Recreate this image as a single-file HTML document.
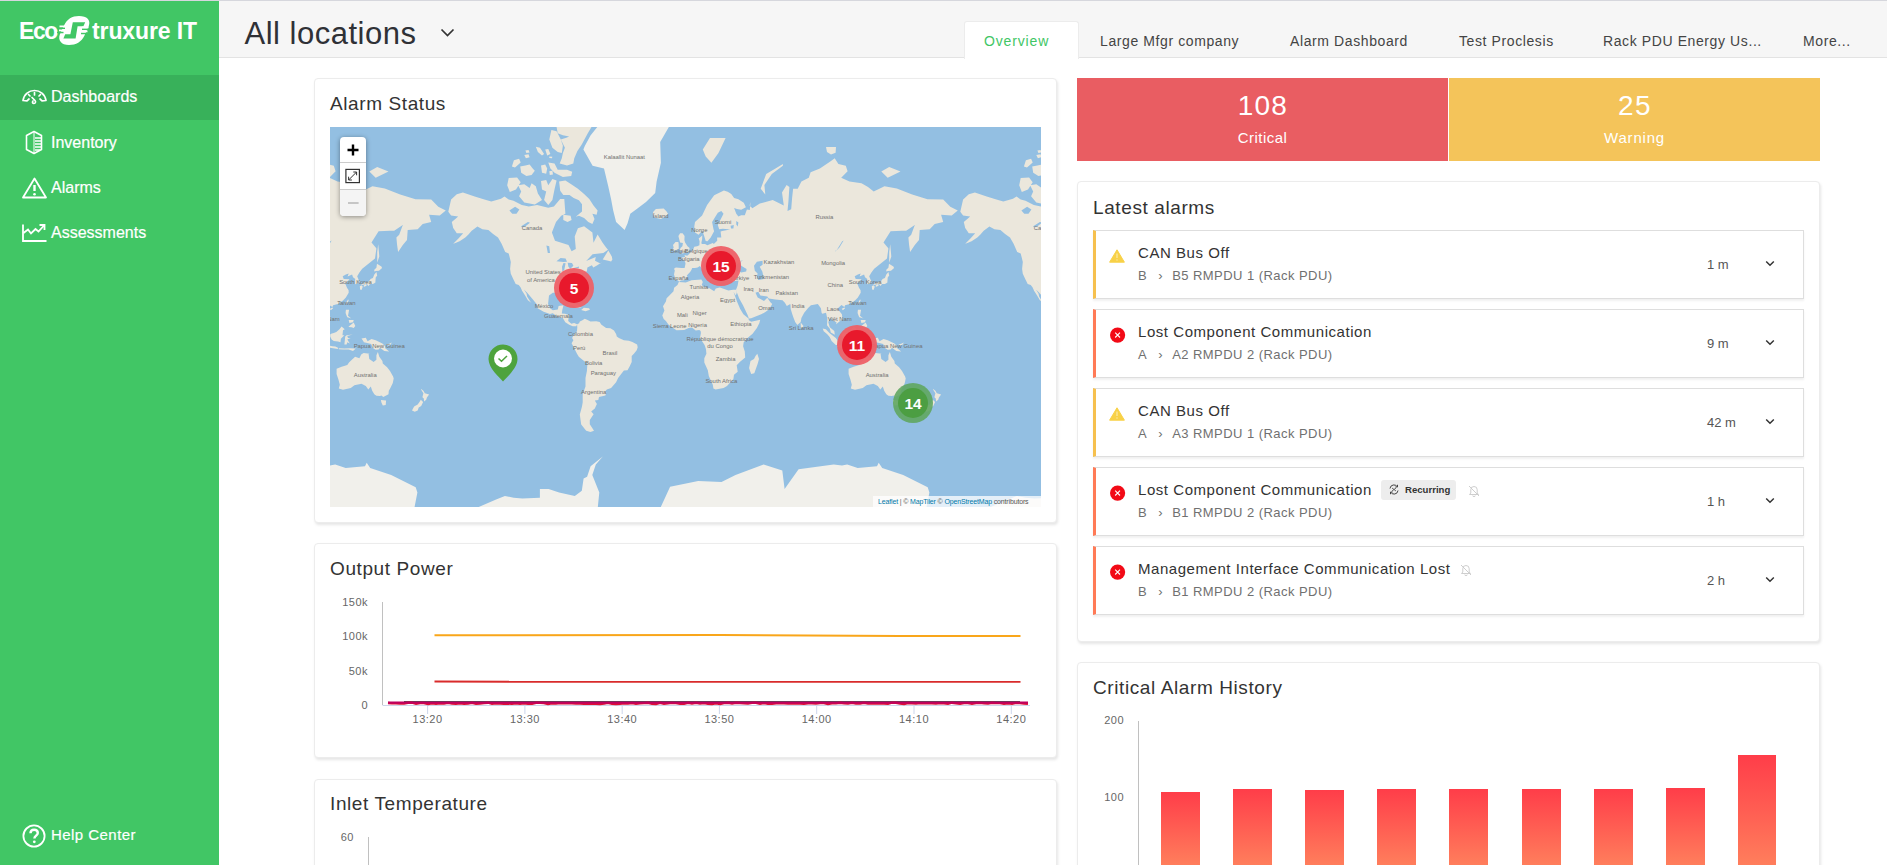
<!DOCTYPE html>
<html><head><meta charset="utf-8">
<style>
*{box-sizing:border-box;margin:0;padding:0}
html,body{width:1887px;height:865px;overflow:hidden;background:#fff;font-family:"Liberation Sans",sans-serif;color:#333}
.a{position:absolute;white-space:nowrap}
#topline{left:0;top:0;width:1887px;height:1px;background:#d6d7dd}
#side{left:0;top:1px;width:219px;height:864px;background:#41c665}
#active{left:0;top:75px;width:219px;height:45px;background:#38b15a}
.nav{left:51px;font-size:16px;color:#fff;line-height:16px;-webkit-text-stroke:0.2px #fff}
#hdr{left:219px;top:1px;width:1668px;height:57px;background:#f6f6f6;border-bottom:1px solid #e3e3e3}
.tab{font-size:14px;color:#444;letter-spacing:0.6px;line-height:14px}
.card{background:#fff;border:1px solid #ececec;border-radius:4px;box-shadow:1px 2px 3px rgba(0,0,0,0.10)}
.ctitle{font-size:19px;color:#333;line-height:19px;letter-spacing:0.6px}
.row{background:#fff;border:1px solid #dedede;box-shadow:0 2px 2px rgba(0,0,0,0.06)}
.rt{font-size:15px;color:#333;line-height:15px;letter-spacing:0.55px}
.rs{font-size:13px;color:#707070;line-height:13px;letter-spacing:0.45px}
.tm{font-size:13px;color:#555;line-height:13px}
.mk{width:40px;height:40px;border-radius:50%;background:rgba(238,96,102,0.95)}
.mk .mi{position:absolute;left:5px;top:5px;width:30px;height:30px;border-radius:50%;background:#e8192c;color:#fff;font-weight:bold;font-size:15.5px;line-height:32px;text-align:center}
.mk.g{background:rgba(96,166,96,0.9)}
.mk.g .mi{background:#4c9e42}
.ml{position:absolute;width:80px;text-align:center;font-size:5.9px;line-height:9px;color:#707070;white-space:nowrap}
.ax{font-size:11px;color:#666;line-height:11px;letter-spacing:0.5px}
</style></head><body>
<div class="a" id="topline"></div>
<div class="a" id="side"></div>
<div class="a" id="active"></div>

<!-- logo -->
<div class="a" style="left:19px;top:20px;font-size:23px;font-weight:bold;color:#fff;line-height:23px;letter-spacing:-1.4px">Eco</div>
<div class="a" style="left:92px;top:20px;font-size:23px;font-weight:bold;color:#fff;line-height:23px;letter-spacing:-0.1px">truxure IT</div>
<svg class="a" style="left:57px;top:15px" width="34" height="31">
<path d="M12 30C4 30 0.8 25 2.8 19.5L7 10.5C10 4 15 1 22 1C30 1 34 5 31.8 11L27.5 20.5C24.5 27 19 30 12 30Z" fill="#fff"/>
<path d="M15.8 7.3H28.2L26.4 11.3H20.6L18.6 23.6H6.4L8.2 19.2H13.4Z" fill="#41c665"/>
<path d="M0 13.2H8M0 17.6H6.5M25 14.2H34M24 18.6H34" stroke="#41c665" stroke-width="1.5"/>
<path d="M2.5 11.4H8.5M2 15.4H7.5M24.8 12.4H31.5M24.2 16.4H30.5" stroke="#fff" stroke-width="1.6"/>
</svg>
<svg class="a" style="left:21px;top:88px" width="27" height="18" fill="none" stroke="#fff" stroke-width="1.7" stroke-linejoin="round" stroke-linecap="round">
<path d="M2 12.5C3 6 8 2.5 13.5 2.5C19 2.5 24 6 25 12.5L21 12.8L19 11M2 12.5L6 12.8L8 11"/>
<path d="M13.5 4.5V7M7.5 6.5L9 8M19.5 6.5L18 8"/>
<path d="M11 9.5L14 12.5C15 13.5 14.5 15.5 13 15.5C11.5 15.5 11 14 12 13"/>
</svg>
<svg class="a" style="left:24px;top:130px" width="20" height="25" fill="none" stroke="#fff" stroke-width="1.6" stroke-linejoin="round">
<path d="M2.5 5.5L10 1.5L17.5 5.5V19.5L10 23.5L2.5 19.5Z"/>
<path d="M10 1.5V23.5" stroke-width="1"/>
<path d="M11 8H17M11 11H17M11 14H17M11 17H17M11 20H16" stroke-width="1.3"/>
</svg>
<svg class="a" style="left:21px;top:176px" width="27" height="24" fill="none" stroke="#fff" stroke-width="1.8" stroke-linejoin="round">
<path d="M13.5 2.5L25 21.5H2Z"/>
<path d="M13.5 9V15" stroke-width="2.4"/>
<circle cx="13.5" cy="18.2" r="1.3" fill="#fff" stroke="none"/>
</svg>
<svg class="a" style="left:21px;top:222px" width="27" height="21" fill="none" stroke="#fff" stroke-width="1.8">
<path d="M2 2.5V19H25.5"/>
<path d="M2.5 11L7 7.5L10 11.5L14.5 7L17.5 9.5L23 3.5"/>
<path d="M18.5 3H23.5V8"/>
</svg>
<svg class="a" style="left:22px;top:824px" width="25" height="25" fill="none" stroke="#fff">
<circle cx="12" cy="12" r="10.6" stroke-width="1.8"/>
<path d="M8.5 9.2C8.5 7 10 5.7 12.1 5.7C14.3 5.7 15.8 7 15.8 9C15.8 11.5 12.4 11.8 12.4 14.5" stroke-width="2.4"/>
<circle cx="12.3" cy="17.8" r="1.4" fill="#fff" stroke="none"/>
</svg>

<div class="a nav" style="top:89px">Dashboards</div>
<div class="a nav" style="top:135px">Inventory</div>
<div class="a nav" style="top:180px">Alarms</div>
<div class="a nav" style="top:225px">Assessments</div>
<div class="a nav" style="top:827px;font-size:15px;line-height:15px;letter-spacing:0.45px">Help Center</div>

<div class="a" id="hdr"></div>
<div class="a" style="left:244.5px;top:17.5px;font-size:31px;color:#2f3136;line-height:31px;letter-spacing:0.5px">All locations</div>
<svg class="a" style="left:439px;top:27px" width="16" height="11"><path d="M2.5 2.5L8.5 8.5L14.5 2.5" fill="none" stroke="#333" stroke-width="1.7"/></svg>

<!-- tabs -->
<div class="a" style="left:964px;top:21px;width:115px;height:38px;background:#fff;border:1px solid #ececec;border-bottom:none;border-radius:3px 3px 0 0"></div>
<div class="a tab" style="left:984px;top:34px;color:#41c665;letter-spacing:0.85px">Overview</div>
<div class="a tab" style="left:1100px;top:34px">Large Mfgr company</div>
<div class="a tab" style="left:1290px;top:34px">Alarm Dashboard</div>
<div class="a tab" style="left:1459px;top:34px">Test Proclesis</div>
<div class="a tab" style="left:1603px;top:34px">Rack PDU Energy Us...</div>
<div class="a tab" style="left:1803px;top:34px">More...</div>

<!-- Alarm status card -->
<div class="a card" style="left:314px;top:78px;width:743px;height:445px"></div>
<div class="a ctitle" style="left:330px;top:94px">Alarm Status</div>
<div class="a" id="map" style="left:330px;top:127px;width:711px;height:380px;background:#93bfe2;overflow:hidden"><svg width="711" height="380" style="position:absolute;left:0;top:0"><path fill="#ebe7dc" d="M118.3 84.8L121.1 72.6L126.8 67.3L132.9 65.5L144.7 69.6L154.4 72.4L161.3 74.5L171.0 71.7L174.5 69.6L178.7 72.4L183.5 73.8L191.8 78.0L198.8 79.4L207.1 78.0L218.2 80.7L223.9 79.4L230.2 72.1L234.3 72.1L235.4 86.7L231.2 88.8L226.0 95.0L221.9 105.4L225.0 113.8L238.5 117.9L241.6 124.3L245.8 122.1L244.7 109.6L247.9 101.3L254.1 99.2L262.4 105.4L263.5 115.8L267.6 107.5L272.8 115.9L276.1 120.4L278.0 122.7L273.3 126.1L262.6 127.2L256.2 133.9L265.8 129.9L265.0 133.7L270.4 136.4L271.9 135.3L266.9 138.6L263.3 140.4L261.9 138.2L257.4 140.4L256.8 144.4L252.0 146.5L249.8 150.2L249.1 153.1L249.8 156.1L246.3 158.5L242.0 162.4L243.3 169.7L242.9 172.5L240.9 171.1L239.4 168.1L237.7 164.8L234.2 164.2L229.9 164.5L230.3 166.5L227.1 165.7L222.8 165.7L219.0 168.6L218.5 172.9L218.1 177.1L220.0 181.3L222.8 183.3L227.8 182.5L228.6 179.0L233.5 178.3L232.3 183.1L231.8 186.5L234.9 186.8L238.9 188.0L238.2 193.9L241.3 196.7L244.1 196.0L247.1 197.3L246.3 199.3L242.7 199.2L239.2 197.8L235.3 195.3L232.8 191.0L227.1 189.5L222.8 186.2L220.0 187.0L213.6 184.8L207.2 180.9L207.6 178.3L202.9 172.5L197.2 165.7L193.9 162.4L196.5 166.5L197.2 169.7L200.8 175.2L201.5 176.1L197.9 173.2L195.1 168.4L192.2 164.0L190.5 160.3L188.7 158.1L185.7 157.1L183.0 151.5L180.8 146.7L180.1 142.1L180.8 135.1L179.8 130.7L178.7 126.6L175.2 125.0L171.6 116.8L168.0 110.5L163.1 107.0L158.4 102.9L152.4 102.3L147.4 99.4L141.7 103.7L138.2 107.8L135.3 110.5L129.6 114.3L125.4 116.0L123.2 116.8L128.2 111.8L133.2 106.2L126.8 106.2L123.2 100.9L121.8 94.9L128.2 89.5L121.1 88.5ZM630.3 84.8L633.1 72.6L638.8 67.3L644.9 65.5L656.7 69.6L666.4 72.4L673.3 74.5L683.0 71.7L686.5 69.6L690.7 72.4L695.5 73.8L703.8 78.0L710.8 79.4L719.1 78.0L730.2 80.7L735.9 79.4L742.2 72.1L746.3 72.1L747.4 86.7L743.2 88.8L738.0 95.0L733.9 105.4L737.0 113.8L750.5 117.9L753.6 124.3L757.8 122.1L756.7 109.6L759.9 101.3L766.1 99.2L774.4 105.4L775.5 115.8L779.6 107.5L784.8 115.9L788.1 120.4L790.0 122.7L785.3 126.1L774.6 127.2L768.2 133.9L777.8 129.9L777.0 133.7L782.4 136.4L783.9 135.3L778.9 138.6L775.3 140.4L773.9 138.2L769.4 140.4L768.8 144.4L764.0 146.5L761.8 150.2L761.1 153.1L761.8 156.1L758.3 158.5L754.0 162.4L755.3 169.7L754.9 172.5L752.9 171.1L751.4 168.1L749.7 164.8L746.2 164.2L741.9 164.5L742.3 166.5L739.1 165.7L734.8 165.7L731.0 168.6L730.5 172.9L730.1 177.1L732.0 181.3L734.8 183.3L739.8 182.5L740.6 179.0L745.5 178.3L744.3 183.1L743.8 186.5L746.9 186.8L750.9 188.0L750.2 193.9L753.3 196.7L756.1 196.0L759.1 197.3L758.3 199.3L754.7 199.2L751.2 197.8L747.3 195.3L744.8 191.0L739.1 189.5L734.8 186.2L732.0 187.0L725.6 184.8L719.2 180.9L719.6 178.3L714.9 172.5L709.2 165.7L705.9 162.4L708.5 166.5L709.2 169.7L712.8 175.2L713.5 176.1L709.9 173.2L707.1 168.4L704.2 164.0L702.5 160.3L700.7 158.1L697.7 157.1L695.0 151.5L692.8 146.7L692.1 142.1L692.8 135.1L691.8 130.7L690.7 126.6L687.2 125.0L683.6 116.8L680.0 110.5L675.1 107.0L670.4 102.9L664.4 102.3L659.4 99.4L653.7 103.7L650.2 107.8L647.3 110.5L641.6 114.3L637.4 116.0L635.2 116.8L640.2 111.8L645.2 106.2L638.8 106.2L635.2 100.9L633.8 94.9L640.2 89.5L633.1 88.5ZM272.7 132.4L278.3 123.6L281.8 129.4L282.4 132.6L281.1 134.5L278.3 133.7ZM323.1 85.1L325.9 82.0L333.7 81.6L336.6 84.5L338.0 86.8L335.9 89.2L330.9 92.1L325.2 90.8L323.1 87.5ZM247.1 197.3L249.1 196.2L249.8 194.6L252.0 193.6L254.8 191.8L257.6 193.1L260.5 194.6L266.2 194.3L269.7 195.0L271.2 197.5L276.1 201.1L280.4 201.3L284.0 203.6L286.1 207.0L286.8 209.6L288.9 211.0L293.9 213.2L298.9 213.7L302.4 214.9L307.1 217.4L307.7 220.3L306.7 223.2L303.9 226.8L301.7 229.0L301.7 234.9L299.6 239.4L297.5 243.2L293.9 243.5L288.1 251.1L286.1 255.2L281.1 261.1L276.8 262.5L275.4 264.2L276.4 265.4L275.4 268.5L269.0 269.9L268.3 273.1L264.8 273.6L266.9 276.9L264.8 281.4L261.2 284.5L263.6 287.2L259.8 293.1L259.8 297.2L264.0 303.7L260.5 304.9L256.2 303.7L251.2 297.6L249.8 287.6L252.0 279.4L252.7 275.2L252.7 267.2L255.5 259.4L255.5 251.1L256.9 244.0L257.4 236.4L253.4 233.4L248.8 229.7L247.0 226.8L244.1 221.0L241.6 216.3L243.4 213.2L242.1 211.0L243.4 208.5L245.1 207.0L247.0 203.9L247.3 200.3ZM348.8 155.0L355.8 155.5L361.5 153.2L371.4 152.5L372.8 155.0L371.7 158.1L373.6 159.7L379.0 161.0L384.2 164.3L385.8 161.4L389.9 160.5L398.4 163.5L403.1 162.7L406.0 162.7L406.8 165.7L405.8 168.4L403.6 165.0L407.0 174.4L410.2 182.1L413.4 187.3L418.8 191.7L418.6 193.1L421.2 194.7L430.2 192.7L429.4 196.0L426.9 201.1L422.6 206.8L418.4 210.3L416.2 212.2L413.7 215.3L413.1 219.3L414.8 224.6L415.2 230.4L409.8 234.9L406.7 238.3L407.7 244.8L404.0 247.8L403.4 251.9L401.3 254.2L397.0 259.0L393.6 261.1L385.6 262.5L383.4 261.6L382.8 257.7L378.8 248.9L377.8 243.2L374.3 235.6L374.3 231.2L376.4 226.8L376.0 222.2L374.6 218.1L370.0 211.0L370.9 206.0L370.6 203.9L369.3 203.1L365.7 203.5L362.0 200.5L358.6 201.1L354.2 202.9L346.5 203.3L341.6 199.9L338.4 197.5L335.9 193.9L333.7 192.0L332.3 188.5L334.4 183.6L333.0 179.3L335.9 174.4L336.6 171.3L339.4 168.4L343.5 164.2L344.1 160.7L347.5 158.1ZM427.3 226.8L429.0 231.9L427.6 237.1L424.3 246.3L421.2 247.1L419.8 243.2L419.1 240.9L420.5 234.1L424.0 231.9L425.5 229.0ZM-162.8 154.7L-163.8 153.8L-165.5 152.5L-167.5 152.9L-167.3 149.8L-168.0 147.4L-167.2 143.5L-168.0 141.7L-166.2 140.4L-160.5 141.0L-157.4 141.0L-156.5 136.8L-156.9 134.7L-158.4 133.1L-161.6 130.7L-156.9 130.1L-157.5 127.9L-154.8 128.8L-152.5 126.8L-152.1 125.0L-149.8 124.1L-148.4 121.6L-147.7 119.7L-144.8 119.2L-142.6 118.2L-142.4 114.3L-143.3 111.5L-139.7 108.6L-139.9 112.5L-140.6 115.5L-140.3 117.0L-137.0 117.0L-134.6 118.2L-129.2 116.0L-128.2 117.0L-124.8 113.8L-124.9 110.5L-120.7 110.5L-121.4 104.5L-119.7 104.0L-111.8 102.6L-119.2 101.7L-122.8 102.3L-124.2 97.9L-118.5 86.8L-120.7 84.1L-124.2 85.8L-129.9 94.9L-128.5 102.3L-127.9 104.3L-131.3 110.5L-134.5 114.3L-136.3 114.0L-138.0 108.6L-139.2 105.1L-139.6 103.4L-143.4 107.8L-147.0 105.4L-147.7 99.4L-147.0 94.9L-139.9 88.5L-134.9 78.0L-131.3 73.0L-127.8 68.2L-118.1 63.5L-114.3 64.8L-110.7 66.9L-107.9 71.0L-103.6 72.2L-98.2 75.7L-96.1 80.2L-100.8 82.7L-105.0 82.0L-107.9 80.9L-105.7 86.8L-103.6 89.5L-100.8 88.2L-97.2 88.2L-95.1 82.4L-92.2 83.1L-91.5 75.0L-92.4 78.5L-89.6 81.3L-82.2 76.6L-69.3 72.9L-58.2 78.5L-60.0 65.5L-55.4 58.1L-52.6 60.0L-53.6 74.8L-54.5 84.0L-50.8 82.2L-49.9 71.1L-48.9 61.8L-44.3 61.8L-40.6 54.4L-33.2 50.7L-31.4 45.2L-22.1 41.5L-11.0 34.1L-7.3 31.3L-3.6 36.9L3.8 38.7L5.6 44.3L-0.8 50.7L7.5 54.4L19.5 56.3L26.0 60.0L31.7 64.6L42.5 59.2L54.8 61.5L70.2 67.6L85.5 72.3L101.2 72.6L108.3 79.8L115.8 83.4L109.7 88.5L99.1 87.8L101.2 94.9L92.7 97.0L87.7 102.3L77.7 102.9L77.0 113.0L72.8 118.0L68.1 125.0L67.1 118.0L66.4 110.5L69.2 107.8L72.8 97.9L64.2 103.7L60.0 103.7L48.6 104.3L41.5 115.5L45.7 120.4L46.4 121.6L45.0 131.6L32.2 141.7L29.4 145.6L27.2 149.3L29.4 154.7L28.7 156.2L25.1 157.3L25.1 152.9L25.3 152.0L23.0 150.2L22.1 147.4L17.6 149.6L18.7 146.5L15.9 147.4L12.7 149.3L13.7 152.0L19.6 152.2L15.2 156.4L17.0 160.7L18.6 163.2L18.7 165.7L15.9 170.5L13.0 173.6L7.8 177.1L3.1 178.3L2.4 180.1L-0.5 178.1L-3.3 180.6L-4.3 182.1L-0.1 187.3L0.5 192.4L-2.6 194.6L-5.8 197.3L-5.5 195.3L-8.3 193.9L-11.2 191.4L-11.9 190.2L-13.7 195.3L-12.2 200.3L-7.7 203.9L-7.2 207.8L-11.2 205.5L-12.2 201.8L-15.0 198.2L-14.6 191.7L-16.0 185.8L-19.7 186.8L-20.4 185.8L-21.1 181.3L-24.2 177.1L-28.2 177.8L-31.1 178.3L-33.9 180.9L-37.8 185.8L-40.6 191.0L-41.3 194.9L-44.6 198.0L-46.7 195.3L-48.4 191.1L-49.7 187.3L-51.3 182.1L-51.5 178.3L-51.7 177.1L-55.2 179.0L-57.1 175.7L-59.5 173.2L-66.6 172.5L-73.3 171.6L-74.7 169.4L-81.6 168.4L-83.7 164.8L-86.5 165.7L-84.3 170.5L-81.6 172.1L-78.0 174.1L-74.7 170.8L-71.6 175.2L-69.8 176.9L-72.6 182.1L-76.6 185.1L-80.8 187.3L-90.8 191.2L-93.1 191.5L-94.4 188.0L-99.0 178.3L-102.9 171.3L-105.0 165.7L-106.0 162.7L-105.0 160.2L-104.3 158.3L-103.5 153.6L-109.3 154.3L-111.4 153.8L-115.7 152.9L-117.1 148.4L-117.5 147.2L-121.4 146.5L-122.2 146.3L-120.7 151.1L-121.1 151.3L-122.8 154.0L-124.5 151.6L-126.4 148.4L-127.1 144.6L-129.1 142.5L-132.8 139.8L-135.3 136.6L-137.3 137.0L-137.0 139.8L-135.6 140.6L-132.0 143.9L-128.5 147.2L-130.6 149.3L-132.0 151.1L-132.5 151.3L-132.6 147.4L-134.6 145.9L-137.4 144.0L-139.9 141.7L-142.1 139.0L-144.4 140.4L-147.1 141.1L-149.8 141.1L-150.5 142.7L-151.7 144.8L-155.2 148.4L-154.5 149.6L-156.2 151.8L-158.2 153.2L-161.1 153.4ZM349.2 154.7L348.2 153.8L346.5 152.5L344.5 152.9L344.7 149.8L344.0 147.4L344.8 143.5L344.0 141.7L345.8 140.4L351.5 141.0L354.6 141.0L355.5 136.8L355.1 134.7L353.6 133.1L350.4 130.7L355.1 130.1L354.5 127.9L357.2 128.8L359.5 126.8L359.9 125.0L362.2 124.1L363.6 121.6L364.3 119.7L367.2 119.2L369.4 118.2L369.6 114.3L368.7 111.5L372.3 108.6L372.1 112.5L371.4 115.5L371.7 117.0L375.0 117.0L377.4 118.2L382.8 116.0L383.8 117.0L387.2 113.8L387.1 110.5L391.3 110.5L390.6 104.5L392.3 104.0L400.2 102.6L392.8 101.7L389.2 102.3L387.8 97.9L393.5 86.8L391.3 84.1L387.8 85.8L382.1 94.9L383.5 102.3L384.1 104.3L380.7 110.5L377.5 114.3L375.7 114.0L374.0 108.6L372.8 105.1L372.4 103.4L368.6 107.8L365.0 105.4L364.3 99.4L365.0 94.9L372.1 88.5L377.1 78.0L380.7 73.0L384.2 68.2L393.9 63.5L397.7 64.8L401.3 66.9L404.1 71.0L408.4 72.2L413.8 75.7L415.9 80.2L411.2 82.7L407.0 82.0L404.1 80.9L406.3 86.8L408.4 89.5L411.2 88.2L414.8 88.2L416.9 82.4L419.8 83.1L420.5 75.0L419.6 78.5L422.4 81.3L429.8 76.6L442.7 72.9L453.8 78.5L452.0 65.5L456.6 58.1L459.4 60.0L458.4 74.8L457.5 84.0L461.2 82.2L462.1 71.1L463.1 61.8L467.7 61.8L471.4 54.4L478.8 50.7L480.6 45.2L489.9 41.5L501.0 34.1L504.7 31.3L508.4 36.9L515.8 38.7L517.6 44.3L511.2 50.7L519.5 54.4L531.5 56.3L538.0 60.0L543.7 64.6L554.5 59.2L566.8 61.5L582.2 67.6L597.5 72.3L613.2 72.6L620.3 79.8L627.8 83.4L621.7 88.5L611.1 87.8L613.2 94.9L604.7 97.0L599.7 102.3L589.7 102.9L589.0 113.0L584.8 118.0L580.1 125.0L579.1 118.0L578.4 110.5L581.2 107.8L584.8 97.9L576.2 103.7L572.0 103.7L560.6 104.3L553.5 115.5L557.7 120.4L558.4 121.6L557.0 131.6L544.2 141.7L541.4 145.6L539.2 149.3L541.4 154.7L540.7 156.2L537.1 157.3L537.1 152.9L537.3 152.0L535.0 150.2L534.1 147.4L529.6 149.6L530.7 146.5L527.9 147.4L524.7 149.3L525.7 152.0L531.6 152.2L527.2 156.4L529.0 160.7L530.6 163.2L530.7 165.7L527.9 170.5L525.0 173.6L519.8 177.1L515.1 178.3L514.4 180.1L511.5 178.1L508.7 180.6L507.7 182.1L511.9 187.3L512.5 192.4L509.4 194.6L506.2 197.3L506.5 195.3L503.7 193.9L500.8 191.4L500.1 190.2L498.3 195.3L499.8 200.3L504.3 203.9L504.8 207.8L500.8 205.5L499.8 201.8L497.0 198.2L497.4 191.7L496.0 185.8L492.3 186.8L491.6 185.8L490.9 181.3L487.8 177.1L483.8 177.8L480.9 178.3L478.1 180.9L474.2 185.8L471.4 191.0L470.7 194.9L467.4 198.0L465.3 195.3L463.6 191.1L462.3 187.3L460.7 182.1L460.5 178.3L460.3 177.1L456.8 179.0L454.9 175.7L452.5 173.2L445.4 172.5L438.7 171.6L437.3 169.4L430.4 168.4L428.3 164.8L425.5 165.7L427.7 170.5L430.4 172.1L434.0 174.1L437.3 170.8L440.4 175.2L442.2 176.9L439.4 182.1L435.4 185.1L431.2 187.3L421.2 191.2L418.9 191.5L417.6 188.0L413.0 178.3L409.1 171.3L407.0 165.7L406.0 162.7L407.0 160.2L407.7 158.3L408.5 153.6L402.7 154.3L400.6 153.8L396.3 152.9L394.9 148.4L394.5 147.2L390.6 146.5L389.8 146.3L391.3 151.1L390.9 151.3L389.2 154.0L387.5 151.6L385.6 148.4L384.9 144.6L382.9 142.5L379.2 139.8L376.7 136.6L374.7 137.0L375.0 139.8L376.4 140.6L380.0 143.9L383.5 147.2L381.4 149.3L380.0 151.1L379.5 151.3L379.4 147.4L377.4 145.9L374.6 144.0L372.1 141.7L369.9 139.0L367.6 140.4L364.9 141.1L362.2 141.1L361.5 142.7L360.3 144.8L356.8 148.4L357.5 149.6L355.8 151.8L353.8 153.2L350.9 153.4ZM349.1 127.0L352.2 126.6L359.0 124.8L359.6 121.1L357.5 119.2L355.1 115.5L354.4 113.0L354.6 109.1L352.6 106.2L350.1 106.2L348.4 109.1L349.4 113.0L350.1 115.5L352.9 116.0L352.4 119.2L350.5 120.9L349.8 123.4L352.9 124.6ZM348.7 122.3L348.7 118.0L348.4 115.0L345.5 115.0L343.0 118.0L343.7 120.4L342.4 123.0L343.7 123.9L347.2 122.5ZM372.8 22.5L380.0 11.1L395.6 11.1L388.5 26.0L381.4 35.7L375.7 29.4ZM39.3 44.4L47.2 39.9L58.5 44.4L45.7 50.7ZM551.3 44.4L559.2 39.9L570.5 44.4L557.7 50.7ZM47.2 135.8L49.3 129.4L48.2 117.3L47.2 125.0ZM559.2 135.8L561.3 129.4L560.2 117.3L559.2 125.0ZM236.5 177.7L240.6 175.8L247.0 177.5L251.7 180.3L247.0 180.7L242.7 178.3L239.2 177.8ZM251.2 183.0L253.8 180.7L259.1 181.3L259.9 182.7L255.5 184.2L252.0 183.3ZM31.4 157.6L34.4 155.5L37.9 155.2L40.0 152.9L40.5 152.0L42.9 151.1L44.3 147.4L46.4 145.0L47.2 148.4L45.7 150.6L45.6 152.0L45.4 154.7L45.6 155.2L44.0 156.4L42.6 157.1L40.0 157.1L38.9 158.5L38.3 159.0L37.2 157.3L34.4 157.6L31.5 158.1ZM543.4 157.6L546.4 155.5L549.9 155.2L552.0 152.9L552.5 152.0L554.9 151.1L556.3 147.4L558.4 145.0L559.2 148.4L557.7 150.6L557.6 152.0L557.4 154.7L557.6 155.2L556.0 156.4L554.6 157.1L552.0 157.1L550.9 158.5L550.3 159.0L549.2 157.3L546.4 157.6L543.5 158.1ZM44.3 144.6L46.0 144.0L49.0 143.7L52.1 141.1L51.4 139.4L47.0 136.8L46.4 140.8L44.3 142.7ZM556.3 144.6L558.0 144.0L561.0 143.7L564.1 141.1L563.4 139.4L559.0 136.8L558.4 140.8L556.3 142.7ZM29.8 159.3L30.1 162.4L31.5 163.0L32.8 159.8L31.5 158.3ZM541.8 159.3L542.1 162.4L543.5 163.0L544.8 159.8L543.5 158.3ZM33.6 159.3L34.4 159.8L36.8 158.5L35.8 157.6L33.9 158.3ZM545.6 159.3L546.4 159.8L548.8 158.5L547.8 157.6L545.9 158.3ZM18.0 172.4L18.7 172.9L17.0 177.5L16.0 176.0ZM530.0 172.4L530.7 172.9L529.0 177.5L528.0 176.0ZM-0.3 181.8L2.4 180.4L3.1 181.2L0.9 183.3ZM511.7 181.8L514.4 180.4L515.1 181.2L512.9 183.3ZM470.7 195.6L473.5 198.9L472.4 201.1L471.0 201.1L470.7 198.2ZM15.9 182.8L19.1 182.8L18.7 185.1L18.0 188.8L21.6 191.7L20.1 191.0L17.3 190.2L16.6 188.8L15.6 186.1ZM527.9 182.8L531.1 182.8L530.7 185.1L530.0 188.8L533.6 191.7L532.1 191.0L529.3 190.2L528.6 188.8L527.6 186.1ZM18.7 199.6L23.7 195.6L25.3 198.9L23.7 201.1L21.6 200.3L18.7 199.9ZM530.7 199.6L535.7 195.6L537.3 198.9L535.7 201.1L533.6 200.3L530.7 199.9ZM18.7 193.1L23.7 193.1L23.0 195.3L19.4 196.0ZM530.7 193.1L535.7 193.1L535.0 195.3L531.4 196.0ZM0.2 207.5L1.1 206.8L3.8 206.0L6.3 205.0L9.5 202.2L11.6 199.6L14.7 202.2L13.0 203.2L12.5 208.2L14.3 208.2L10.9 211.7L10.5 215.3L8.0 214.6L3.8 213.9L1.6 212.4L0.2 209.6ZM512.2 207.5L513.1 206.8L515.8 206.0L518.3 205.0L521.5 202.2L523.6 199.6L526.7 202.2L525.0 203.2L524.5 208.2L526.3 208.2L522.9 211.7L522.5 215.3L520.0 214.6L515.8 213.9L513.6 212.4L512.2 209.6ZM492.7 201.6L495.9 202.2L499.4 206.0L502.3 208.2L505.8 211.0L508.0 213.9L507.7 217.9L505.8 217.9L501.6 213.9L499.8 210.3L497.3 207.2L493.7 204.2ZM-5.2 219.3L-3.3 218.1L-0.8 218.6L2.4 219.3L5.3 219.4L8.0 220.7L7.8 222.0L3.1 221.3L-1.2 220.7L-4.8 219.4ZM506.8 219.3L508.7 218.1L511.2 218.6L514.4 219.3L517.3 219.4L520.0 220.7L519.8 222.0L515.1 221.3L510.8 220.7L507.2 219.4ZM8.8 221.3L14.4 221.4L20.1 221.3L25.8 221.4L23.0 223.9L18.7 222.5L13.0 222.5L8.8 222.2ZM520.8 221.3L526.4 221.4L532.1 221.3L537.8 221.4L535.0 223.9L530.7 222.5L525.0 222.5L520.8 222.2ZM14.4 217.4L15.2 209.6L16.6 208.2L22.7 207.5L17.3 208.9L18.0 211.0L20.6 210.9L17.3 212.4L19.8 216.4L17.3 215.3L16.6 217.4ZM526.4 217.4L527.2 209.6L528.6 208.2L534.7 207.5L529.3 208.9L530.0 211.0L532.6 210.9L529.3 212.4L531.8 216.4L529.3 215.3L528.6 217.4ZM31.5 211.4L35.8 210.7L37.6 214.3L41.5 211.9L45.7 213.3L52.4 216.4L55.0 218.9L55.0 221.0L59.2 224.6L54.3 223.9L50.0 220.7L48.6 222.5L45.7 222.7L42.9 221.0L41.2 217.1L37.2 216.0L33.9 215.3L32.9 213.6ZM543.5 211.4L547.8 210.7L549.6 214.3L553.5 211.9L557.7 213.3L564.4 216.4L567.0 218.9L567.0 221.0L571.2 224.6L566.3 223.9L562.0 220.7L560.6 222.5L557.7 222.7L554.9 221.0L553.2 217.1L549.2 216.0L545.9 215.3L544.9 213.6ZM56.4 217.4L59.2 216.7L61.8 215.6L60.7 217.4L58.5 218.4ZM568.4 217.4L571.2 216.7L573.8 215.6L572.7 217.4L570.5 218.4ZM6.6 241.7L6.6 247.1L8.5 252.7L9.8 257.7L8.8 261.6L13.0 262.8L20.8 260.9L24.4 258.2L31.5 256.8L35.8 259.0L38.3 262.5L40.8 259.4L42.2 263.7L44.3 267.2L46.4 268.8L50.0 269.0L51.4 268.6L53.3 270.1L58.5 267.2L58.8 263.7L60.4 260.9L62.8 256.0L63.7 251.4L63.1 249.5L60.0 244.0L57.1 240.2L52.8 236.4L52.4 234.0L49.3 229.7L47.9 224.9L46.4 228.2L46.4 232.7L43.6 234.9L39.3 231.9L38.6 227.1L39.8 226.8L33.6 226.1L31.2 227.4L29.4 231.2L25.1 229.7L21.6 233.1L19.0 235.6L17.3 237.9L11.6 239.7ZM518.6 241.7L518.6 247.1L520.5 252.7L521.8 257.7L520.8 261.6L525.0 262.8L532.8 260.9L536.4 258.2L543.5 256.8L547.8 259.0L550.3 262.5L552.8 259.4L554.2 263.7L556.3 267.2L558.4 268.8L562.0 269.0L563.4 268.6L565.3 270.1L570.5 267.2L570.8 263.7L572.4 260.9L574.8 256.0L575.7 251.4L575.1 249.5L572.0 244.0L569.1 240.2L564.8 236.4L564.4 234.0L561.3 229.7L559.9 224.9L558.4 228.2L558.4 232.7L555.6 234.9L551.3 231.9L550.6 227.1L551.8 226.8L545.6 226.1L543.2 227.4L541.4 231.2L537.1 229.7L533.6 233.1L531.0 235.6L529.3 237.9L523.6 239.7ZM50.9 273.1L56.1 273.4L55.7 277.9L52.8 278.6L51.4 275.5ZM562.9 273.1L568.1 273.4L567.7 277.9L564.8 278.6L563.4 275.5ZM90.8 261.8L93.4 263.7L94.8 266.3L99.1 267.6L96.9 270.5L96.2 272.7L94.1 274.6L93.8 271.4L92.4 270.3L93.4 266.3L91.2 262.8ZM602.8 261.8L605.4 263.7L606.8 266.3L611.1 267.6L608.9 270.5L608.2 272.7L606.1 274.6L605.8 271.4L604.4 270.3L605.4 266.3L603.2 262.8ZM90.8 272.7L93.1 275.0L91.2 279.0L88.7 280.4L87.7 283.4L84.8 284.7L82.0 283.4L84.1 279.4L87.7 277.5L89.8 274.6ZM602.8 272.7L605.1 275.0L603.2 279.0L600.7 280.4L599.7 283.4L596.8 284.7L594.0 283.4L596.1 279.4L599.7 277.5L601.8 274.6ZM229.1 54.4L235.4 53.4L241.6 57.6L247.9 61.7L254.1 66.9L259.3 72.1L263.5 78.4L267.6 83.6L266.6 87.7L262.4 86.7L264.5 91.9L262.4 97.1L258.3 95.0L254.1 90.9L248.9 88.8L245.8 89.8L252.0 84.6L252.0 77.3L248.9 73.2L243.7 71.1L239.5 68.0L233.3 68.0L230.2 63.8ZM233.3 87.7L240.6 88.8L241.6 93.0L237.5 95.0L233.3 93.0ZM452.9 36.9L445.5 41.5L436.2 47.0L430.7 61.8L435.3 67.4L434.4 58.1L441.8 47.0L452.9 38.7ZM496.0 20.0L506.0 20.0L505.6 25.8L501.0 27.6L497.0 25.0ZM226.6 0.0L261.5 0.0L257.8 6.2L251.6 17.7L247.4 23.9L244.3 31.2L243.3 36.4L237.0 38.5L229.7 36.4L231.8 31.2L232.9 26.0L234.9 20.8L232.9 16.7L230.8 12.5L237.0 10.4L239.1 9.4L232.9 8.3L227.7 6.2ZM221.4 3.1L226.6 4.2L230.8 12.5L232.9 18.7L231.8 26.0L227.7 25.0L222.4 20.8L219.3 12.5ZM205.8 19.8L210.0 20.8L214.1 27.1L212.0 28.6L207.9 25.0ZM215.2 22.4L218.3 21.9L220.4 27.1L217.2 28.6ZM195.4 23.4L198.5 22.9L199.6 25.5L196.4 26.0ZM707.4 23.4L710.5 22.9L711.6 25.5L708.4 26.0ZM194.3 28.1L198.5 27.3L199.6 30.2L195.9 31.2ZM706.3 28.1L710.5 27.3L711.6 30.2L707.9 31.2ZM219.3 29.4L222.4 29.7L221.9 31.2L219.3 31.0ZM183.9 33.3L189.1 31.7L190.7 35.4L185.0 40.6L181.9 39.6ZM695.9 33.3L701.1 31.7L702.7 35.4L697.0 40.6L693.9 39.6ZM190.2 39.6L195.4 38.5L199.6 37.5L202.7 41.6L204.8 43.7L201.6 47.9L196.4 48.9L191.2 45.8ZM702.2 39.6L707.4 38.5L711.6 37.5L714.7 41.6L716.8 43.7L713.6 47.9L708.4 48.9L703.2 45.8ZM211.0 38.5L215.2 37.5L217.2 41.6L216.2 46.8L212.0 45.8ZM218.3 35.4L224.5 36.4L227.7 42.7L237.0 42.7L242.2 44.8L241.2 48.9L232.9 50.0L224.5 45.8L220.4 41.6ZM219.3 44.2L222.4 43.7L223.0 47.4L219.8 47.9ZM178.7 51.0L187.1 50.5L190.7 55.2L186.0 62.4L179.8 65.0L177.2 58.3ZM690.7 51.0L699.1 50.5L702.7 55.2L698.0 62.4L691.8 65.0L689.2 58.3ZM188.1 58.3L194.3 57.2L199.6 60.9L201.6 56.2L205.8 59.3L207.9 66.6L212.0 72.9L204.8 77.5L194.3 75.5L189.1 69.2L191.2 64.5ZM700.1 58.3L706.3 57.2L711.6 60.9L713.6 56.2L717.8 59.3L719.9 66.6L724.0 72.9L716.8 77.5L706.3 75.5L701.1 69.2L703.2 64.5ZM211.0 54.1L216.2 53.1L218.3 58.3L222.4 52.0L226.6 53.6L224.5 62.4L222.4 72.9L218.3 78.1L214.1 72.9L216.2 64.5L212.0 62.4Z"/><path fill="#93bfe2" d="M396.3 142.7L397.0 145.2L401.3 145.4L407.0 143.7L411.2 145.6L416.2 144.6L416.6 142.1L411.2 138.8L410.5 134.1L413.0 133.3L407.0 137.2L404.8 138.8L403.4 137.0L400.6 134.7L399.3 137.4L398.0 139.8ZM424.0 138.8L426.9 134.7L432.6 133.7L432.6 137.8L429.7 139.8L432.3 144.6L434.0 152.0L428.3 152.9L426.9 150.2L427.6 146.5L424.8 143.7ZM400.6 98.8L403.8 97.9L403.4 101.4L401.0 101.4ZM406.3 94.0L408.4 95.5L407.7 99.4L406.3 97.6ZM226.4 134.3L230.6 130.9L235.6 131.6L237.0 134.7L233.5 134.9ZM232.3 144.2L234.2 143.3L235.6 136.2L233.5 136.0L232.0 139.8ZM237.7 135.8L242.0 136.0L243.4 138.8L240.3 141.7L238.4 139.8ZM238.4 144.4L244.8 141.9L245.0 142.9L240.6 144.8ZM243.7 141.1L249.1 139.4L248.8 141.0L244.8 141.5ZM179.4 83.4L185.1 79.8L189.4 82.4L186.5 86.8L182.3 86.8ZM691.4 83.4L697.1 79.8L701.4 82.4L698.5 86.8L694.3 86.8ZM190.8 99.4L197.9 94.9L200.0 95.8L195.1 99.4L192.2 100.0ZM702.8 99.4L709.9 94.9L712.0 95.8L707.1 99.4L704.2 100.0ZM217.8 126.1L220.0 126.1L219.2 119.2L216.4 118.5ZM-7.2 123.9L-5.5 123.6L0.2 114.3L1.6 113.5L-2.6 120.4L-6.2 124.3ZM504.8 123.9L506.5 123.6L512.2 114.3L513.6 113.5L509.4 120.4L505.8 124.3Z"/><path fill="#f1f0eb" d="M253.4 22.5L262.6 38.7L274.0 41.6L278.3 59.4L281.1 72.2L283.2 83.4L286.1 94.9L294.6 102.9L297.5 96.4L300.3 86.8L307.4 81.6L316.0 75.0L325.2 66.1L326.6 54.7L330.9 35.7L330.2 15.1L340.1 -2.2L314.5 -24.1L286.1 -12.5L269.0 -2.2L260.5 8.6L254.8 18.9ZM-410.8 464.8L-410.8 408.1L-363.3 380.0L-345.9 372.5L-337.1 369.0L-328.4 370.7L-319.6 371.6L-302.1 370.7L-302.1 362.0L-293.4 362.0L-282.9 365.5L-267.2 369.0L-260.2 363.7L-258.4 351.5L-254.9 349.7L-251.4 339.2L-239.2 329.6L-246.2 337.5L-249.7 348.0L-242.7 365.5L-245.0 388.0L-187.0 388.0L-181.2 380.0L-171.9 359.7L-143.8 353.9L-120.5 355.1L-106.5 348.0L-78.4 337.5L-59.7 343.4L-57.4 362.1L-43.4 342.2L-8.3 337.5L0.0 338.4L5.2 337.5L15.7 341.0L35.0 339.2L36.7 335.7L40.2 341.0L61.2 348.0L85.7 360.2L87.4 365.5L83.0 388.0L101.2 408.1L101.2 464.8ZM101.2 464.8L101.2 408.1L148.7 380.0L166.1 372.5L174.9 369.0L183.6 370.7L192.4 371.6L209.9 370.7L209.9 362.0L218.6 362.0L229.1 365.5L244.8 369.0L251.8 363.7L253.6 351.5L257.1 349.7L260.6 339.2L272.8 329.6L265.8 337.5L262.3 348.0L269.3 365.5L267.0 388.0L325.0 388.0L330.8 380.0L340.1 359.7L368.2 353.9L391.5 355.1L405.5 348.0L433.6 337.5L452.3 343.4L454.6 362.1L468.6 342.2L503.7 337.5L512.0 338.4L517.2 337.5L527.7 341.0L547.0 339.2L548.7 335.7L552.2 341.0L573.2 348.0L597.7 360.2L599.4 365.5L595.0 388.0L613.2 408.1L613.2 464.8ZM613.2 464.8L613.2 408.1L660.7 380.0L678.1 372.5L686.9 369.0L695.6 370.7L704.4 371.6L721.9 370.7L721.9 362.0L730.6 362.0L741.1 365.5L756.8 369.0L763.8 363.7L765.6 351.5L769.1 349.7L772.6 339.2L784.8 329.6L777.8 337.5L774.3 348.0L781.3 365.5L779.0 388.0L837.0 388.0L842.8 380.0L852.1 359.7L880.2 353.9L903.5 355.1L917.5 348.0L945.6 337.5L964.3 343.4L966.6 362.1L980.6 342.2L1015.7 337.5L1024.0 338.4L1029.2 337.5L1039.7 341.0L1059.0 339.2L1060.7 335.7L1064.2 341.0L1085.2 348.0L1109.7 360.2L1111.4 365.5L1107.0 388.0L1125.2 408.1L1125.2 464.8Z"/></svg><div class="ml" style="left:254.4px;top:26.3px">Kalaallit Nunaat</div><div class="ml" style="left:162.1px;top:96.6px">Canada</div><div class="ml" style="left:173.1px;top:141.4px">United States</div><div class="ml" style="left:170.9px;top:149.3px">of America</div><div class="ml" style="left:174.0px;top:174.8px">México</div><div class="ml" style="left:188.5px;top:184.9px">Guatemala</div><div class="ml" style="left:210.5px;top:202.9px">Colombia</div><div class="ml" style="left:209.2px;top:217.4px">Perú</div><div class="ml" style="left:239.9px;top:222.2px">Brasil</div><div class="ml" style="left:223.7px;top:231.9px">Bolivia</div><div class="ml" style="left:233.3px;top:241.6px">Paraguay</div><div class="ml" style="left:223.7px;top:260.5px">Argentina</div><div class="ml" style="left:290.7px;top:84.5px">Ísland</div><div class="ml" style="left:353.0px;top:90.6px">Suomi</div><div class="ml" style="left:329.4px;top:98.5px">Norge</div><div class="ml" style="left:454.4px;top:85.6px">Russia</div><div class="ml" style="left:308.5px;top:120.2px">België</div><div class="ml" style="left:326.3px;top:120.2px">Belgique</div><div class="ml" style="left:318.7px;top:127.5px">Bulgaria</div><div class="ml" style="left:308.5px;top:146.6px">España</div><div class="ml" style="left:328.9px;top:156.3px">Tunisia</div><div class="ml" style="left:320.0px;top:166.0px">Algeria</div><div class="ml" style="left:357.6px;top:169.0px">Egypt</div><div class="ml" style="left:312.3px;top:183.5px">Mali</div><div class="ml" style="left:329.6px;top:181.7px">Niger</div><div class="ml" style="left:327.6px;top:193.7px">Nigeria</div><div class="ml" style="left:299.6px;top:195.0px">Sierra Leone</div><div class="ml" style="left:370.9px;top:193.2px">Ethiopia</div><div class="ml" style="left:350.0px;top:207.9px">République démocratique</div><div class="ml" style="left:350.0px;top:215.3px">du Congo</div><div class="ml" style="left:355.6px;top:228.0px">Zambia</div><div class="ml" style="left:351.3px;top:249.9px">South Africa</div><div class="ml" style="left:409.0px;top:130.8px">Kazakhstan</div><div class="ml" style="left:401.4px;top:146.1px">Turkmenistan</div><div class="ml" style="left:369.6px;top:147.4px">Türkiye</div><div class="ml" style="left:378.5px;top:157.5px">Iraq</div><div class="ml" style="left:393.8px;top:158.8px">Iran</div><div class="ml" style="left:416.7px;top:162.1px">Pakistan</div><div class="ml" style="left:396.3px;top:176.6px">Oman</div><div class="ml" style="left:428.1px;top:174.9px">India</div><div class="ml" style="left:431.2px;top:196.5px">Sri Lanka</div><div class="ml" style="left:463.1px;top:131.7px">Mongolia</div><div class="ml" style="left:465.3px;top:153.7px">China</div><div class="ml" style="left:495.2px;top:151.1px">South Korea</div><div class="ml" style="left:487.3px;top:172.1px">Taiwan</div><div class="ml" style="left:463.1px;top:178.3px">Laos</div><div class="ml" style="left:469.7px;top:188.0px">Việt Nam</div><div class="ml" style="left:526.9px;top:215.2px">Papua New Guinea</div><div class="ml" style="left:507.1px;top:243.8px">Australia</div><div class="ml" style="left:-14.5px;top:151.1px">South Korea</div><div class="ml" style="left:-23.7px;top:172.1px">Taiwan</div><div class="ml" style="left:9.2px;top:215.2px">Papua New Guinea</div><div class="ml" style="left:-4.8px;top:243.8px">Australia</div><div class="ml" style="left:-42.3px;top:188.0px">Việt Nam</div><div class="ml" style="left:674.1px;top:96.6px">Canada</div></div>


<!-- map controls -->
<div class="a" style="left:340px;top:137px;width:26px;height:79px;background:#fff;border-radius:4px;box-shadow:0 1px 5px rgba(0,0,0,0.4)"></div>
<div class="a" style="left:340px;top:189px;width:26px;height:27px;background:#f4f4f4;border-radius:0 0 4px 4px"></div>
<div class="a" style="left:340px;top:162px;width:26px;height:1px;background:#ccc"></div>
<div class="a" style="left:340px;top:189px;width:26px;height:1px;background:#ccc"></div>
<svg class="a" style="left:340px;top:137px" width="26" height="79">
<path d="M13 7.5V18.5M7.5 13H18.5" stroke="#000" stroke-width="2.4"/>
<rect x="5.9" y="32.4" width="13.5" height="13.2" fill="none" stroke="#333" stroke-width="1.2"/>
<path d="M8.6 43L16.6 35M8.6 43v-3.3M8.6 43h3.3M16.6 35h-3.3M16.6 35v3.3" fill="none" stroke="#333" stroke-width="1"/>
<path d="M8 66H18.6" stroke="#bbb" stroke-width="1.6"/>
</svg>
<!-- markers -->
<div class="a mk" style="left:554px;top:268px"><div class="mi">5</div></div>
<div class="a mk" style="left:701px;top:246px"><div class="mi">15</div></div>
<div class="a mk" style="left:837px;top:325px"><div class="mi">11</div></div>
<div class="a mk g" style="left:893px;top:383px"><div class="mi">14</div></div>
<svg class="a" style="left:487px;top:344px" width="32" height="38">
<path d="M16 37.5C12 33 1.5 24 1.5 15A14.5 14.5 0 0 1 30.5 15C30.5 24 20 33 16 37.5Z" fill="#4ea33d"/>
<circle cx="16" cy="14.5" r="9" fill="#fff"/>
<path d="M11.5 14.5l3 2.8 5.5-5.3" fill="none" stroke="#4ea33d" stroke-width="1.5"/>
</svg>
<!-- attribution -->
<div class="a" style="left:873px;top:496px;width:168px;height:11px;background:rgba(255,255,255,0.75);font-size:7px;line-height:11px;color:#555;padding-left:5px;letter-spacing:-0.15px">
<span style="color:#0078a8">Leaflet</span> | &copy; <span style="color:#0078a8">MapTiler</span> &copy; <span style="color:#0078a8">OpenStreetMap</span> contributors</div>

<!-- output power -->
<div class="a card" style="left:314px;top:543px;width:743px;height:215px"></div>
<div class="a ctitle" style="left:330px;top:559px">Output Power</div>

<svg class="a" style="left:330px;top:590px" width="720" height="140"><path d="M52.5 12.0 L52.5 115.0" stroke="#c0c0c0" stroke-width="1"/><path d="M52.5 115.5 L700.0 115.5" stroke="#ccd6eb" stroke-width="1"/><path d="M97.6 115.5 L97.6 124.0" stroke="#ccd6eb" stroke-width="1"/><path d="M194.9 115.5 L194.9 124.0" stroke="#ccd6eb" stroke-width="1"/><path d="M292.2 115.5 L292.2 124.0" stroke="#ccd6eb" stroke-width="1"/><path d="M389.4 115.5 L389.4 124.0" stroke="#ccd6eb" stroke-width="1"/><path d="M486.7 115.5 L486.7 124.0" stroke="#ccd6eb" stroke-width="1"/><path d="M584.0 115.5 L584.0 124.0" stroke="#ccd6eb" stroke-width="1"/><path d="M681.3 115.5 L681.3 124.0" stroke="#ccd6eb" stroke-width="1"/><path d="M104.5 45.2 L390.0 45.0 L570.0 46.0 L690.5 46.0" fill="none" stroke="#f9a61a" stroke-width="2"/><path d="M104.5 91.6 L690.5 91.8" fill="none" stroke="#d92b2b" stroke-width="2"/><path d="M74.0 111.5 L690.0 111.5" fill="none" stroke="#2f6a55" stroke-width="1.2"/><path d="M58.0 113.0 L62.0 113.4 L66.0 113.2 L70.0 113.5 L74.0 113.5 L78.0 112.8 L82.0 112.7 L86.0 113.8 L90.0 113.0 L94.0 113.0 L98.0 114.0 L102.0 113.3 L106.0 113.8 L110.0 113.3 L114.0 113.5 L118.0 112.9 L122.0 113.5 L126.0 113.8 L130.0 113.4 L134.0 113.7 L138.0 113.6 L142.0 112.8 L146.0 113.7 L150.0 113.5 L154.0 113.1 L158.0 112.7 L162.0 113.8 L166.0 113.3 L170.0 113.6 L174.0 113.8 L178.0 113.6 L182.0 113.9 L186.0 113.2 L190.0 113.7 L194.0 113.3 L198.0 113.9 L202.0 113.8 L206.0 112.8 L210.0 112.9 L214.0 113.0 L218.0 114.0 L222.0 113.3 L226.0 113.5 L230.0 113.1 L234.0 113.4 L238.0 113.2 L242.0 113.2 L246.0 113.5 L250.0 113.5 L254.0 113.9 L258.0 113.6 L262.0 113.9 L266.0 113.8 L270.0 114.0 L274.0 113.6 L278.0 112.9 L282.0 113.8 L286.0 114.0 L290.0 113.9 L294.0 113.4 L298.0 113.6 L302.0 113.0 L306.0 113.8 L310.0 113.4 L314.0 113.1 L318.0 112.8 L322.0 113.8 L326.0 114.0 L330.0 112.8 L334.0 113.7 L338.0 113.2 L342.0 112.9 L346.0 113.1 L350.0 113.7 L354.0 113.8 L358.0 112.8 L362.0 113.5 L366.0 112.8 L370.0 113.6 L374.0 113.1 L378.0 113.8 L382.0 114.0 L386.0 113.4 L390.0 114.0 L394.0 113.1 L398.0 112.8 L402.0 113.5 L406.0 112.7 L410.0 113.0 L414.0 113.2 L418.0 113.5 L422.0 112.9 L426.0 112.8 L430.0 113.8 L434.0 113.1 L438.0 113.9 L442.0 113.9 L446.0 113.2 L450.0 113.3 L454.0 113.4 L458.0 113.5 L462.0 113.5 L466.0 113.4 L470.0 113.5 L474.0 113.9 L478.0 113.4 L482.0 113.3 L486.0 113.6 L490.0 113.0 L494.0 113.1 L498.0 114.0 L502.0 113.4 L506.0 113.4 L510.0 112.7 L514.0 113.2 L518.0 113.5 L522.0 112.7 L526.0 113.5 L530.0 113.5 L534.0 112.8 L538.0 113.5 L542.0 113.3 L546.0 113.6 L550.0 113.2 L554.0 113.6 L558.0 113.7 L562.0 112.7 L566.0 112.8 L570.0 113.6 L574.0 114.0 L578.0 113.0 L582.0 113.3 L586.0 113.5 L590.0 113.1 L594.0 113.2 L598.0 113.1 L602.0 113.2 L606.0 113.5 L610.0 113.1 L614.0 113.2 L618.0 113.7 L622.0 112.7 L626.0 113.4 L630.0 113.7 L634.0 113.1 L638.0 113.0 L642.0 113.7 L646.0 113.0 L650.0 112.9 L654.0 113.3 L658.0 113.6 L662.0 112.8 L666.0 113.1 L670.0 113.1 L674.0 113.8 L678.0 113.3 L682.0 113.8 L686.0 112.9 L690.0 113.1 L694.0 113.5 L698.0 113.9" fill="none" stroke="#e01030" stroke-width="2.4"/><path d="M58.0 112.6 L698.0 112.6" fill="none" stroke="#c0005e" stroke-width="2.4"/></svg>
<div class="a ax" style="left:300px;width:68px;text-align:right;top:597.2px">150k</div>
<div class="a ax" style="left:300px;width:68px;text-align:right;top:630.8px">100k</div>
<div class="a ax" style="left:300px;width:68px;text-align:right;top:666.0px">50k</div>
<div class="a ax" style="left:300px;width:68px;text-align:right;top:699.9px">0</div>
<div class="a ax" style="left:397.6px;width:60px;text-align:center;top:713.6px">13:20</div>
<div class="a ax" style="left:494.9px;width:60px;text-align:center;top:713.6px">13:30</div>
<div class="a ax" style="left:592.2px;width:60px;text-align:center;top:713.6px">13:40</div>
<div class="a ax" style="left:689.4px;width:60px;text-align:center;top:713.6px">13:50</div>
<div class="a ax" style="left:786.7px;width:60px;text-align:center;top:713.6px">14:00</div>
<div class="a ax" style="left:884.0px;width:60px;text-align:center;top:713.6px">14:10</div>
<div class="a ax" style="left:981.3px;width:60px;text-align:center;top:713.6px">14:20</div>

<!-- inlet temp -->
<div class="a card" style="left:314px;top:779px;width:743px;height:100px"></div>
<div class="a ctitle" style="left:330px;top:794px">Inlet Temperature</div>

<div class="a ax" style="left:300px;width:54px;text-align:right;top:831.9px">60</div><div class="a" style="left:368px;top:837px;width:1px;height:40px;background:#c0c0c0"></div>

<!-- status boxes -->
<div class="a" style="left:1077px;top:78px;width:371px;height:83px;background:#e95d62"></div>
<div class="a" style="left:1449px;top:78px;width:371px;height:83px;background:#f4c45a"></div>
<div class="a" style="left:1077px;top:92px;width:371px;text-align:center;font-size:28px;color:#fff;line-height:28px;letter-spacing:1.2px;text-indent:1px">108</div>
<div class="a" style="left:1077px;top:130px;width:371px;text-align:center;font-size:15px;color:#fff;line-height:15px;letter-spacing:0.45px">Critical</div>
<div class="a" style="left:1449px;top:92px;width:371px;text-align:center;font-size:28px;color:#fff;line-height:28px;letter-spacing:1.5px;text-indent:1px">25</div>
<div class="a" style="left:1449px;top:130px;width:371px;text-align:center;font-size:15px;color:#fff;line-height:15px;letter-spacing:0.8px">Warning</div>

<!-- latest alarms -->
<div class="a card" style="left:1077px;top:181px;width:743px;height:461px"></div>
<div class="a ctitle" style="left:1093px;top:198px">Latest alarms</div>

<div class="a row" style="left:1093px;top:230px;width:711px;height:69px;border-left:3px solid #f6c04e"><svg class="a" style="left:13px;top:18px" width="16" height="14"><path d="M8 0.8L15.4 13.2H0.6Z" fill="#f8d147" stroke="#f8d147" stroke-width="1" stroke-linejoin="round"/><path d="M8 4.5V9" stroke="#fbe9a8" stroke-width="1.2"/><circle cx="8" cy="11" r="0.7" fill="#fbe9a8"/></svg><div class="a rt" style="left:42px;top:14px">CAN Bus Off</div><div class="a rs" style="left:42px;top:38px">B<span style="display:inline-block;width:25px;text-align:center;padding-left:2px">&rsaquo;</span>B5 RMPDU 1 (Rack PDU)</div><div class="a tm" style="left:611px;top:27px">1 m</div><svg class="a" style="left:669px;top:29px" width="10" height="7"><path d="M1.2 1.5L5 5.2L8.8 1.5" fill="none" stroke="#333" stroke-width="1.5"/></svg></div>
<div class="a row" style="left:1093px;top:309px;width:711px;height:69px;border-left:3px solid #ff7a56"><svg class="a" style="left:14px;top:17px" width="16" height="16"><circle cx="7.6" cy="8.1" r="7.6" fill="#f20a16"/><path d="M5.2 5.7L10 10.5M10 5.7L5.2 10.5" stroke="#fff" stroke-width="1.1"/></svg><div class="a rt" style="left:42px;top:14px">Lost Component Communication</div><div class="a rs" style="left:42px;top:38px">A<span style="display:inline-block;width:25px;text-align:center;padding-left:2px">&rsaquo;</span>A2 RMPDU 2 (Rack PDU)</div><div class="a tm" style="left:611px;top:27px">9 m</div><svg class="a" style="left:669px;top:29px" width="10" height="7"><path d="M1.2 1.5L5 5.2L8.8 1.5" fill="none" stroke="#333" stroke-width="1.5"/></svg></div>
<div class="a row" style="left:1093px;top:388px;width:711px;height:69px;border-left:3px solid #f6c04e"><svg class="a" style="left:13px;top:18px" width="16" height="14"><path d="M8 0.8L15.4 13.2H0.6Z" fill="#f8d147" stroke="#f8d147" stroke-width="1" stroke-linejoin="round"/><path d="M8 4.5V9" stroke="#fbe9a8" stroke-width="1.2"/><circle cx="8" cy="11" r="0.7" fill="#fbe9a8"/></svg><div class="a rt" style="left:42px;top:14px">CAN Bus Off</div><div class="a rs" style="left:42px;top:38px">A<span style="display:inline-block;width:25px;text-align:center;padding-left:2px">&rsaquo;</span>A3 RMPDU 1 (Rack PDU)</div><div class="a tm" style="left:611px;top:27px">42 m</div><svg class="a" style="left:669px;top:29px" width="10" height="7"><path d="M1.2 1.5L5 5.2L8.8 1.5" fill="none" stroke="#333" stroke-width="1.5"/></svg></div>
<div class="a row" style="left:1093px;top:467px;width:711px;height:69px;border-left:3px solid #ff7a56"><svg class="a" style="left:14px;top:17px" width="16" height="16"><circle cx="7.6" cy="8.1" r="7.6" fill="#f20a16"/><path d="M5.2 5.7L10 10.5M10 5.7L5.2 10.5" stroke="#fff" stroke-width="1.1"/></svg><div class="a rt" style="left:42px;top:14px">Lost Component Communication</div><div class="a rs" style="left:42px;top:38px">B<span style="display:inline-block;width:25px;text-align:center;padding-left:2px">&rsaquo;</span>B1 RMPDU 2 (Rack PDU)</div><div class="a tm" style="left:611px;top:27px">1 h</div><svg class="a" style="left:669px;top:29px" width="10" height="7"><path d="M1.2 1.5L5 5.2L8.8 1.5" fill="none" stroke="#333" stroke-width="1.5"/></svg><div class="a" style="left:285px;top:12px;width:75px;height:20px;background:#ededed;border-radius:3px"></div><svg class="a" style="left:292px;top:16px" width="12" height="11"><path d="M2 4.5a4 4 0 0 1 7.5-1.5M10 6.5a4 4 0 0 1-7.5 1.5M9.5 0.8V3H7.3M2.5 10.2V8h2.2" fill="none" stroke="#444" stroke-width="1"/><path d="M4 4l4 3M8 4l-4 3" stroke="#444" stroke-width="0.8"/></svg><div class="a" style="left:309px;top:17px;font-size:9.6px;line-height:9.6px;color:#333;font-weight:bold">Recurring</div><svg class="a" style="left:372px;top:17px" width="12" height="12"><path d="M6 1.5a3.2 3.2 0 0 0-3.2 3.2V8L1.5 9.5h9L9.2 8V4.7A3.2 3.2 0 0 0 6 1.5ZM4.8 10.5a1.2 1.2 0 0 0 2.4 0M1 1L11 11" fill="none" stroke="#c8c8c8" stroke-width="0.9"/></svg></div>
<div class="a row" style="left:1093px;top:546px;width:711px;height:69px;border-left:3px solid #ff7a56"><svg class="a" style="left:14px;top:17px" width="16" height="16"><circle cx="7.6" cy="8.1" r="7.6" fill="#f20a16"/><path d="M5.2 5.7L10 10.5M10 5.7L5.2 10.5" stroke="#fff" stroke-width="1.1"/></svg><div class="a rt" style="left:42px;top:14px">Management Interface Communication Lost</div><div class="a rs" style="left:42px;top:38px">B<span style="display:inline-block;width:25px;text-align:center;padding-left:2px">&rsaquo;</span>B1 RMPDU 2 (Rack PDU)</div><div class="a tm" style="left:611px;top:27px">2 h</div><svg class="a" style="left:669px;top:29px" width="10" height="7"><path d="M1.2 1.5L5 5.2L8.8 1.5" fill="none" stroke="#333" stroke-width="1.5"/></svg><svg class="a" style="left:364px;top:17px" width="12" height="12"><path d="M6 1.5a3.2 3.2 0 0 0-3.2 3.2V8L1.5 9.5h9L9.2 8V4.7A3.2 3.2 0 0 0 6 1.5ZM4.8 10.5a1.2 1.2 0 0 0 2.4 0M1 1L11 11" fill="none" stroke="#c8c8c8" stroke-width="0.9"/></svg></div>

<!-- critical alarm history -->
<div class="a card" style="left:1077px;top:662px;width:743px;height:220px"></div>
<div class="a ctitle" style="left:1093px;top:678px">Critical Alarm History</div>

<div class="a" style="left:1138px;top:721px;width:1px;height:150px;background:#c0c0c0"></div>
<div class="a" style="left:1161.0px;top:791.8px;width:38.7px;height:88.2px;background:linear-gradient(#ff3d49,#ff7e5c 73px)"></div>
<div class="a" style="left:1233.0px;top:789.0px;width:38.7px;height:91.0px;background:linear-gradient(#ff3d49,#ff7e5c 76px)"></div>
<div class="a" style="left:1305.2px;top:790.2px;width:38.7px;height:89.8px;background:linear-gradient(#ff3d49,#ff7e5c 75px)"></div>
<div class="a" style="left:1377.0px;top:789.0px;width:38.7px;height:91.0px;background:linear-gradient(#ff3d49,#ff7e5c 76px)"></div>
<div class="a" style="left:1449.0px;top:789.0px;width:38.7px;height:91.0px;background:linear-gradient(#ff3d49,#ff7e5c 76px)"></div>
<div class="a" style="left:1522.0px;top:789.0px;width:38.7px;height:91.0px;background:linear-gradient(#ff3d49,#ff7e5c 76px)"></div>
<div class="a" style="left:1594.0px;top:789.0px;width:38.7px;height:91.0px;background:linear-gradient(#ff3d49,#ff7e5c 76px)"></div>
<div class="a" style="left:1666.0px;top:787.7px;width:38.7px;height:92.3px;background:linear-gradient(#ff3d49,#ff7e5c 77px)"></div>
<div class="a" style="left:1737.7px;top:754.7px;width:38.7px;height:125.3px;background:linear-gradient(#ff3d49,#ff7e5c 110px)"></div>
<div class="a ax" style="left:1060px;width:64px;text-align:right;top:714.8px">200</div>
<div class="a ax" style="left:1060px;width:64px;text-align:right;top:791.7px">100</div>
</body></html>
